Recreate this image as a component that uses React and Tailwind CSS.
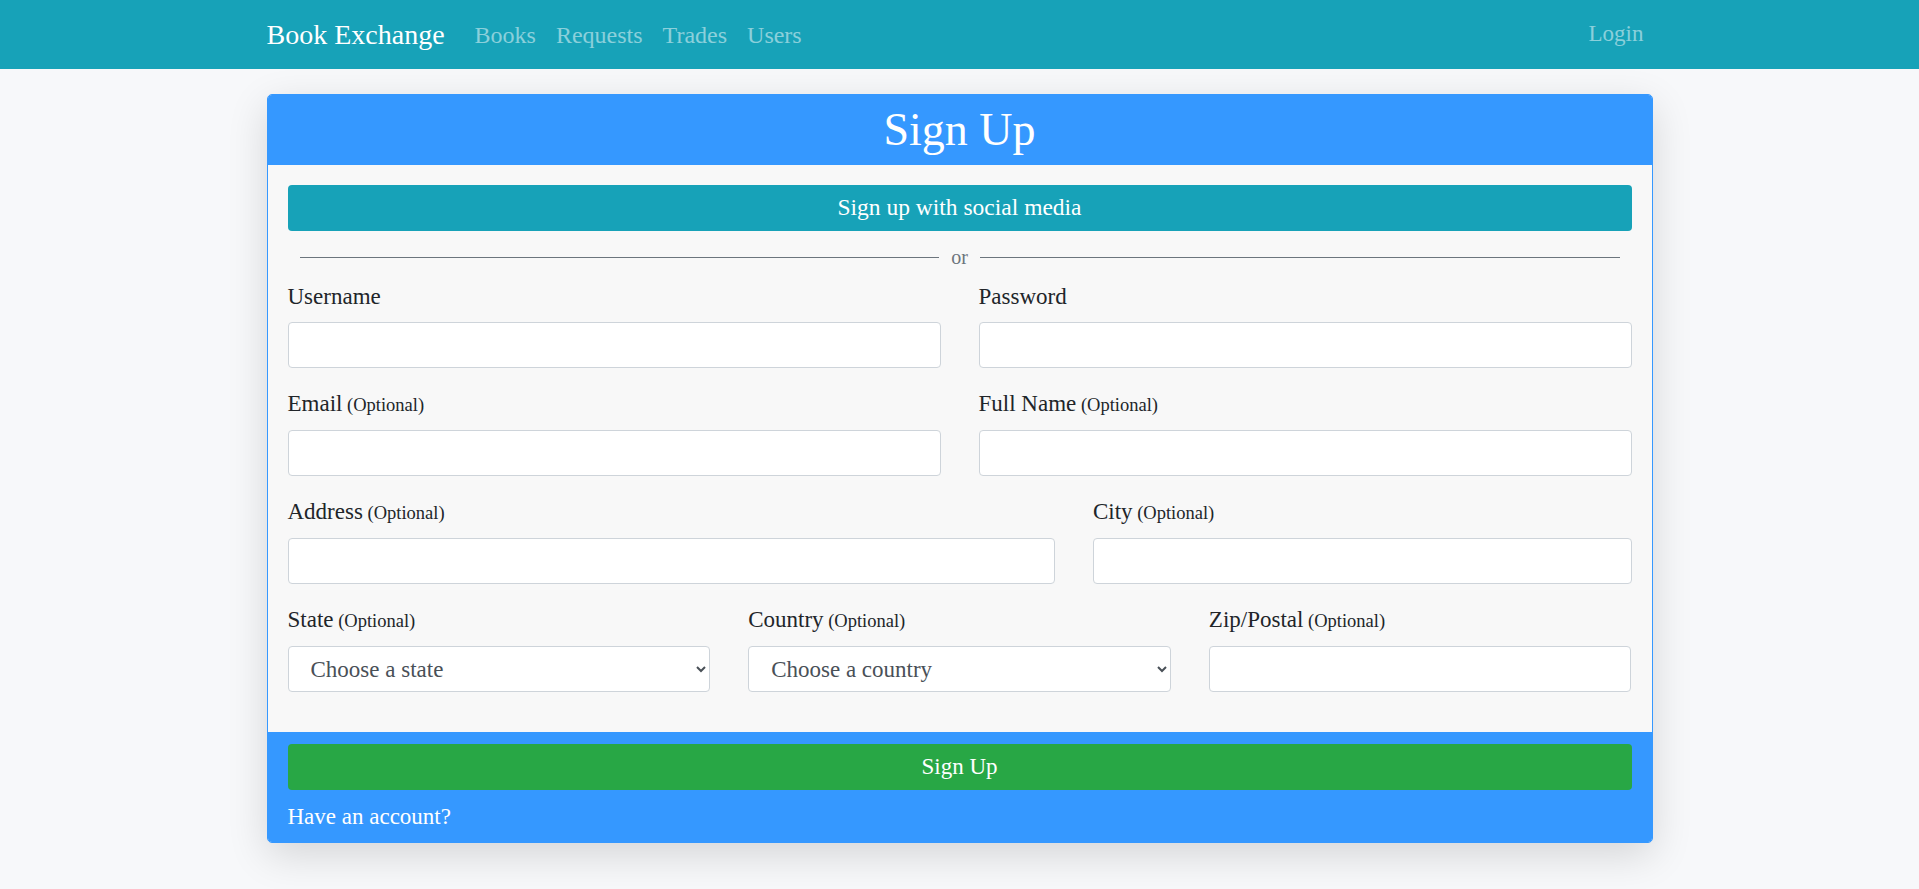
import React from 'react';

const font = { fontFamily: '"Liberation Serif", "Times New Roman", serif' };

function Label({ text, optional }) {
  return (
    <label className="block mb-[8px] leading-[34px] text-[23px] text-[#212529]">
      {text}
      {optional && <span className="text-[18.5px]"> (Optional)</span>}
    </label>
  );
}

function Field({ text, optional }) {
  return (
    <div>
      <Label text={text} optional={optional} />
      <input
        type="text"
        className="block w-full h-[46px] px-3 bg-white border border-[#ced4da] rounded-[4px] text-[23px] text-[#495057] outline-none"
      />
    </div>
  );
}

function SelectField({ text, placeholder }) {
  return (
    <div>
      <Label text={text} optional />
      <select
        defaultValue=""
        className="block w-full h-[46px] pl-[18px] pr-[6px] bg-white border border-[#ced4da] rounded-[4px] text-[23px] text-[#495057] outline-none"
      >
        <option value="" disabled>{placeholder}</option>
      </select>
    </div>
  );
}

export default function App() {
  return (
    <div className="min-h-screen bg-[#f7f8fa]" style={font}>
      {/* Navbar */}
      <nav className="bg-[#17a2b8]">
        <div className="w-[1386px] mx-auto h-[69px] flex items-center">
          <a href="#" className="text-white text-[28px] mr-[30px]">Book Exchange</a>
          <div className="flex items-center gap-[20px] text-[24px] text-white/50">
            <a href="#">Books</a>
            <a href="#">Requests</a>
            <a href="#">Trades</a>
            <a href="#">Users</a>
          </div>
          <a href="#" className="ml-auto mr-[9px] text-[23px] text-white/50">Login</a>
        </div>
      </nav>

      {/* Sign up card */}
      <div className="w-[1386px] mx-auto pt-[25px] pb-10">
        <div className="rounded-[5px] border border-[#3598ff] bg-[#f8f8f8] overflow-hidden shadow-[0_12px_40px_rgba(0,0,0,0.14)]">
          <div className="bg-[#3598ff] py-[12px] text-center text-white text-[46px] leading-[46px]">
            Sign Up
          </div>

          <div className="px-[20px] pt-[20px] pb-[21px]">
            <button className="w-full h-[46px] rounded-[4px] bg-[#17a2b8] text-white text-[23.5px]">
              Sign up with social media
            </button>

            <div className="mt-[11px] flex items-center px-[12px] h-[30px]">
              <div className="flex-1 h-px bg-[#6c757d]" />
              <span className="px-[12px] text-[20px] text-[#6c757d] leading-[30px]">or</span>
              <div className="flex-1 h-px bg-[#6c757d]" />
            </div>

            <div className="mt-[8px] grid grid-cols-2 gap-x-[38px] gap-y-[19px]">
              <Field text="Username" />
              <Field text="Password" />
              <Field text="Email" optional />
              <Field text="Full Name" optional />
            </div>

            <div className="mt-[19px] grid grid-cols-[768fr_539fr] gap-x-[38px]">
              <Field text="Address" optional />
              <Field text="City" optional />
            </div>

            <div className="mt-[19px] mb-[19px] grid grid-cols-3 gap-x-[38px]">
              <SelectField text="State" placeholder="Choose a state" />
              <SelectField text="Country" placeholder="Choose a country" />
              <Field text="Zip/Postal" optional />
            </div>
          </div>

          <div className="bg-[#3598ff] px-[20px] pt-[12px] pb-[11px]">
            <button className="w-full h-[46px] rounded-[4px] bg-[#28a745] text-white text-[23px] mb-[12px]">
              Sign Up
            </button>
            <a href="#" className="block text-white text-[23px] leading-[29px]">Have an account?</a>
          </div>
        </div>
      </div>
    </div>
  );
}
